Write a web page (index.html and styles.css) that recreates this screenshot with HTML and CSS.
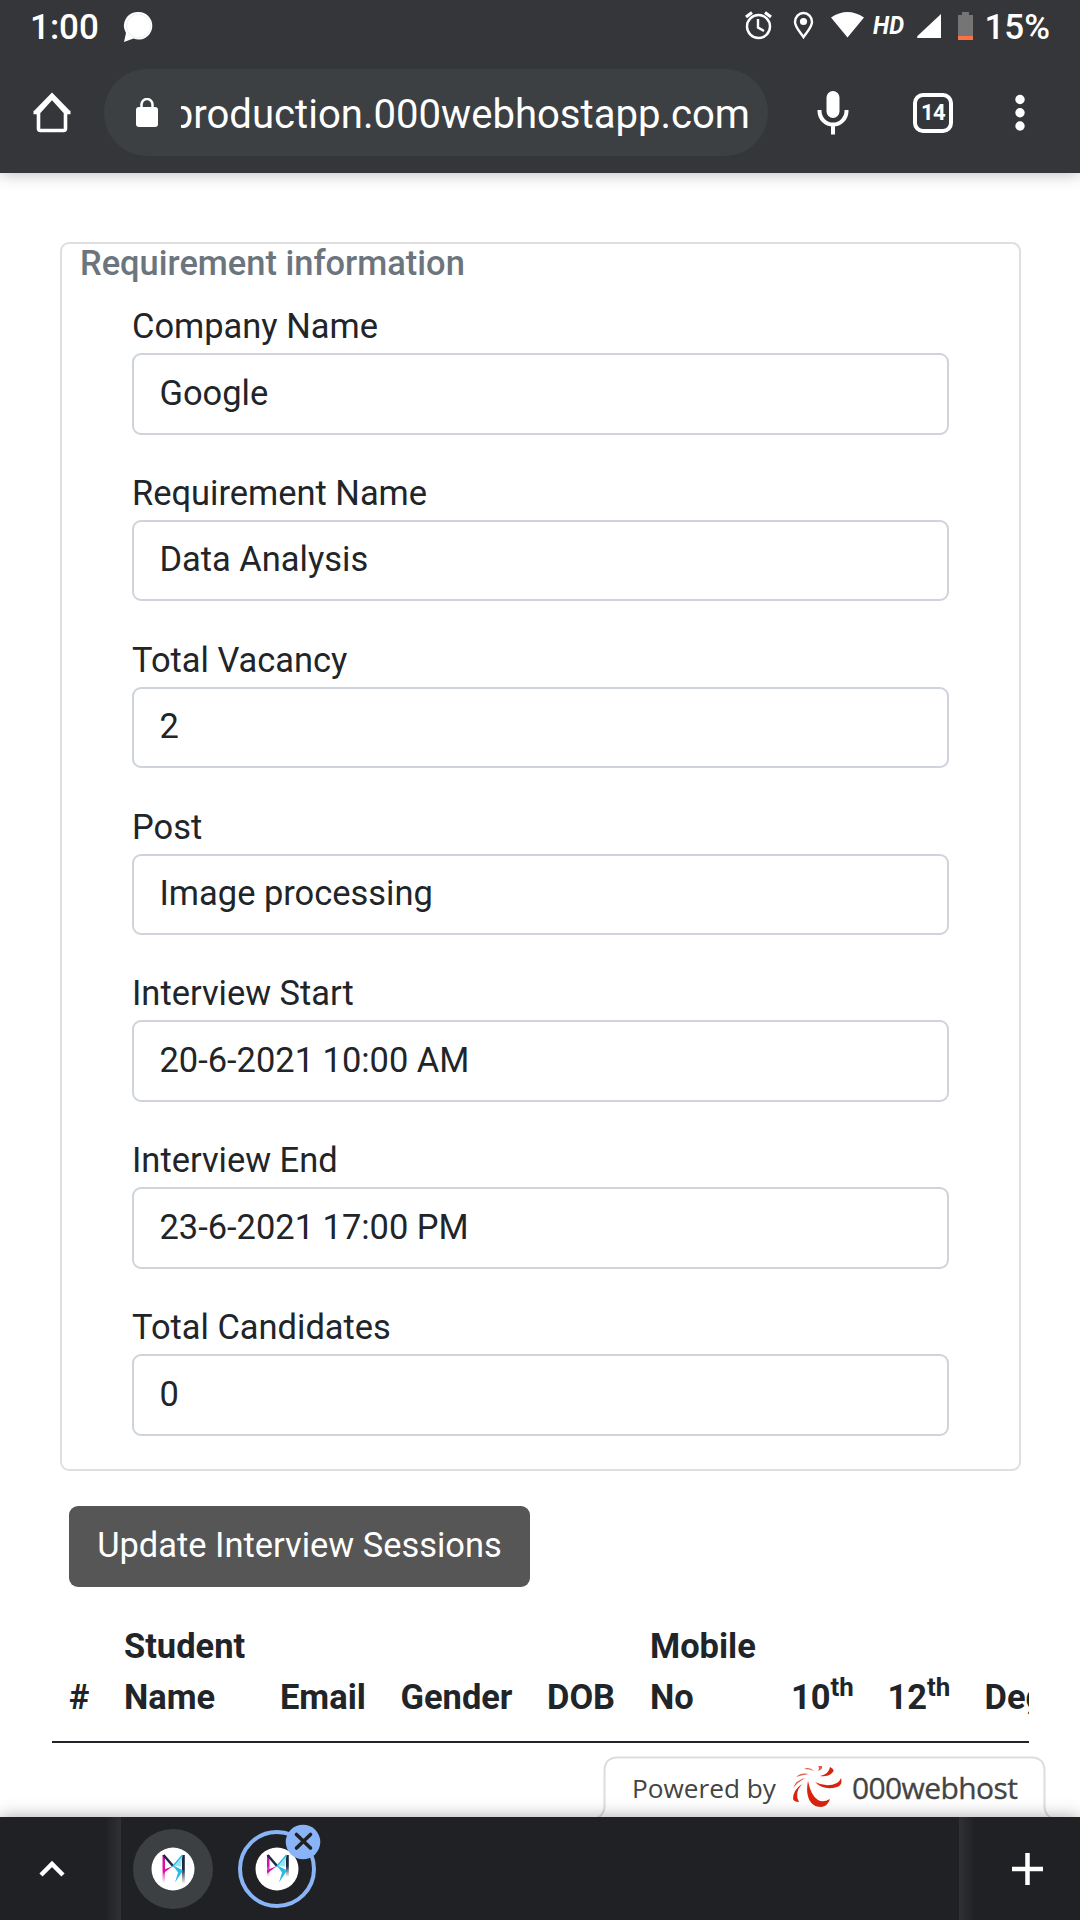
FILE: index.html
```html
<!DOCTYPE html>
<html lang="en">
<head>
<meta charset="utf-8">
<title>Requirement information</title>
<link rel="stylesheet" href="styles.css">
</head>
<body>
<div class="screen">
  <header class="chrome">
    <div class="status">
      <span class="clock">1:00</span>
      <svg class="chat" width="30" height="32" viewBox="0 0 30 32"><path d="M15.5 1a13.5 13.8 0 1 1-5 26.5L1 31l2-9A13.5 13.8 0 0 1 15.5 1z" fill="#fff"/><circle cx="15.5" cy="15" r="12" fill="none" stroke="#eee"/></svg>
      <span class="spacer"></span>
      <svg class="status-icons" width="230" height="34" viewBox="744 10 230 34">
        <g fill="none" stroke="#fff" stroke-width="2.4"><circle cx="758.500" cy="26.500" r="11.500"/><path d="M758 19v8.500l6 3.500"/><path d="M746 17l6-4.500M771 17l-6-4.500" stroke-width="3.200"/><path d="M803.500 37c-4-6-8.500-10-8.500-15a8.500 9 0 0 1 17 0c0 5-4.500 9-8.500 15z"/></g>
        <circle cx="803.500" cy="21.500" r="3.600" fill="#fff"/>
        <path d="M831 17.500q16.500-11 33 0L847.500 37.500z" fill="#fff"/>
        <text class="hd" x="873" y="34" textLength="31" lengthAdjust="spacingAndGlyphs">HD</text>
        <path d="M941 14v24h-23q-2-.5 0-2.500z" fill="#fff"/>
        <path d="M962 12h7v3h4v21h-15V15h4z" fill="#757575"/><path d="M958 36h15v4h-15z" fill="#ff7043"/>
      </svg>
      <span class="battery">15%</span>
    </div>
    <div class="toolbar">
      <svg class="home" width="40" height="42" viewBox="0 0 40 42"><path d="M6.500 19.500v17q0 2 2 2h23q2 0 2-2v-17M1.500 20.500h5L20 5.500l13.500 15h5M3 20.500L20 3l17 17.500" fill="none" stroke="#fff" stroke-width="3.600"/></svg>
      <div class="omnibox">
        <svg class="lock" width="22" height="30" viewBox="0 0 22 30"><rect y="9" width="22" height="20" rx="3" fill="#fff"/><path d="M5.500 10V6.500a5.500 5.500 0 0 1 11 0V10" fill="none" stroke="#fff" stroke-width="2.500"/></svg>
        <div class="url"><span>production.000webhostapp.com</span></div>
      </div>
      <svg class="mic" width="32" height="46" viewBox="0 0 32 46"><rect x="9.500" y="1" width="13" height="27" rx="6.500" fill="#fff"/><path d="M2.500 20v1a13.500 13.500 0 0 0 27 0v-1M16 34v10.500" fill="none" stroke="#fff" stroke-width="4"/></svg>
      <div class="tabs">14</div>
      <svg class="dots" width="10" height="38" viewBox="0 0 10 38"><g fill="#fff"><circle cx="5" cy="5.500" r="4.700"/><circle cx="5" cy="18.700" r="4.700"/><circle cx="5" cy="32" r="4.700"/></g></svg>
    </div>
  </header>

  <main class="page">
    <section class="card">
      <h6 class="card-title">Requirement information</h6>
      <div class="group"><label>Company Name</label><div class="field">Google</div></div>
      <div class="group"><label>Requirement Name</label><div class="field">Data Analysis</div></div>
      <div class="group"><label>Total Vacancy</label><div class="field">2</div></div>
      <div class="group"><label>Post</label><div class="field">Image processing</div></div>
      <div class="group"><label>Interview Start</label><div class="field">20-6-2021 10:00 AM</div></div>
      <div class="group"><label>Interview End</label><div class="field">23-6-2021 17:00 PM</div></div>
      <div class="group"><label>Total Candidates</label><div class="field">0</div></div>
    </section>
    <button class="update">Update Interview Sessions</button>
    <div class="table-wrap">
      <div class="thead">
        <span>#</span><span>Student<br>Name</span><span>Email</span><span>Gender</span><span>DOB</span><span>Mobile<br>No</span><span>10<sup>th</sup></span><span>12<sup>th</sup></span><span>Degree</span>
      </div>
    </div>
    <div class="powered">
      <svg class="powered-shape" width="464" height="64" viewBox="0 0 464 64"><path d="M0 64Q12 61 12.500 51V14Q13 2 25 1.500H440Q452 2 452.500 14V51Q453 61 464 64z" fill="#fff" stroke="#ddddd9" stroke-width="2"/></svg>
      <span class="powered-by">Powered by</span>
      <svg class="swirl" width="50" height="44" viewBox="0 0 50 44"><g fill="#d9230f"><path d="M16 16C13 31 18 42 29 42Q36 41 38 34Q31 38 26 35Q19 31 16 16z"/><path d="M23 17Q35 23 45 18Q48 16 49 13Q51 20 45 22Q32 26 23 17z"/><path d="M28 11Q37 9 38 2Q44 5 40 8Q36 12 28 11z"/><path d="M10 19Q2 28 7 37Q2 37 1 34Q1 25 10 19z"/><path d="M13 13Q4 15 1 23Q6 17 13 13zM17 9Q9 7 4 12Q10 10 17 9zM22 6Q17 1 12 4Q18 4 22 6zM26 6Q28 3 26 1H30Q31 4 26 6z" opacity=".75"/></g></svg>
      <span class="brand">000webhost</span>
    </div>
  </main>

  <footer class="tabstrip">
    <div class="side left"><svg width="28" height="18" viewBox="0 0 28 18"><path d="M3 15L14 4l11 11" fill="none" stroke="#fff" stroke-width="4.500"/></svg></div>
    <div class="favs">
      <div class="fav muted"><svg width="44" height="44" viewBox="0 0 44 44">
        <defs>
          <linearGradient id="pink" x1="0" y1="0" x2="0" y2="1"><stop offset=".5" stop-color="#d611a5"/><stop offset="1" stop-color="#d611a5" stop-opacity="0"/></linearGradient>
          <linearGradient id="navy" x1="0" y1="0" x2="0" y2="1"><stop offset=".5" stop-color="#1b2a41"/><stop offset="1" stop-color="#1b2a41" stop-opacity="0"/></linearGradient>
          <g id="wings"><path d="M12.500 8L22 19" stroke="#1b2a41" stroke-width="2.500"/><path d="M22 19L12 23v3.500z" fill="#d611a5"/><path d="M31.500 8L22 19l8 .5z" fill="#9be1f4"/><path d="M31.500 8L22 19l9 4.500" fill="none" stroke="#25bce5" stroke-width="1.300"/><path d="M23 20l9 3.500-8 12 3-10z" fill="#25bce5"/></g>
        </defs>
        <circle cx="22" cy="22" r="21.500" fill="#fff"/><path d="M11.500 8h2.500v28h-2.500z" fill="url(#pink)"/><path d="M31 8h2.800v29H31z" fill="url(#navy)"/><use href="#wings"/></svg></div>
      <div class="fav active"><svg width="44" height="44" viewBox="0 0 44 44"><circle cx="22" cy="22" r="21.500" fill="#fff"/><path d="M12 8h2.500v22H12z" fill="url(#pink)"/><path d="M31 8h2.800v22H31z" fill="url(#navy)"/><use href="#wings"/></svg>
        <svg class="close" width="36" height="36" viewBox="0 0 36 36"><circle cx="18" cy="18" r="17.300" fill="#8ab4f8"/><path d="M11.500 10.500L25.500 24M25.500 10.500L11.500 24" stroke="#202124" stroke-width="3.600" stroke-linecap="round"/></svg>
      </div>
    </div>
    <div class="side right"><svg width="32" height="32" viewBox="0 0 32 32"><path d="M0 16h31M15.500 0v32" stroke="#fff" stroke-width="4.500"/></svg></div>
  </footer>
</div>
</body>
</html>
```
FILE: styles.css
```css
* { box-sizing: border-box; }
body { margin: 0; background: #fff; color: #212529; font-family: Roboto, sans-serif; font-size: 34.450px; line-height: 51px; }
svg { display: block; flex: none; }
.screen { width: 1080px; height: 1920px; display: flex; flex-direction: column; overflow: hidden; }

.chrome { height: 173px; flex: none; background: #35363a; color: #fff; box-shadow: 0 0 16px rgba(0,0,0,.3); position: relative; z-index: 1; }
.status { height: 54px; display: flex; align-items: center; padding: 0 30px 0 30px; }
.clock, .battery { font-size: 35px; font-weight: 500; line-height: 54px; padding-top: 1px; }
.chat { margin-left: 24px; }
.spacer { flex: 1; }
.status-icons { margin-right: 10px; }
.hd { font: italic 700 25px Roboto, sans-serif; fill: #fff; }
.toolbar { display: flex; align-items: center; height: 87px; margin-top: 15px; padding-left: 32px; }
.omnibox { width: 664px; height: 87px; margin-left: 32px; border-radius: 44px; background: #3c4043; display: flex; align-items: center; padding-left: 32px; }
.url { width: 569px; margin-left: 23px; padding-top: 4px; overflow: hidden; display: flex; justify-content: flex-end; font-size: 40.100px; line-height: 56px; white-space: nowrap; }
.mic { margin-left: 49px; }
.tabs { width: 40px; height: 40px; margin-left: 64px; border: 4px solid #fff; border-radius: 10px; font-size: 22px; letter-spacing: -.5px; font-weight: 700; line-height: 32px; text-align: center; }
.dots { margin-left: 62px; }

.page { flex: 1; min-height: 0; position: relative; padding: 69px 51px 0 52px; }
.card { width: 961px; height: 1229px; margin-left: 8px; border: 2px solid #dfdfdf; border-radius: 9px; padding: 0 70px 0 70px; }
.card-title { margin: 0 0 18px -52px; color: #6c757d; font-size: 34.450px; font-weight: 500; line-height: 39px; }
.group { height: 166.850px; }
.group label { display: block; height: 52px; }
.field { height: 81.500px; border: 2px solid #ced4da; border-radius: 9px; padding: 12.500px 25.500px; }
.update { display: block; width: 461px; height: 81px; margin: 35px 0 0 17px; border: 0; border-radius: 9px; background: #565656; color: #fff; font: 34.450px/51px Roboto, sans-serif; padding: 0 0 3px; white-space: nowrap; }
.table-wrap { width: 977px; margin-top: 16px; overflow: hidden; }
.thead { display: grid; grid-template-columns: 55px 156px 120.500px 146.500px 103px 141px 96.500px 97px 160px; align-items: end; height: 140px; padding-bottom: 18px; border-bottom: 2px solid #212529; font-weight: 700; }
.thead span { padding-left: 17px; white-space: nowrap; }
sup { font-size: .75em; line-height: 0; position: relative; top: -.5em; vertical-align: baseline; }

.powered { position: absolute; left: 593px; top: 1583px; width: 463px; height: 64px; font-family: "Open Sans", sans-serif; font-size: 26.200px; line-height: 36px; color: #444; display: flex; align-items: center; padding: 0 0 1px 39px; }
.powered-shape { position: absolute; left: -1px; top: 0; }
.powered span, .swirl { position: relative; }
.swirl { margin: 0 0 1px 16px; }
.brand { margin-left: 10px; font-size: 30px; letter-spacing: -.6px; -webkit-text-stroke: .3px #444; }

.tabstrip { height: 103px; flex: none; background: #202124; display: flex; box-shadow: 0 0 16px rgba(0,0,0,.35); position: relative; z-index: 1; }
.side { display: flex; align-items: center; width: 121px; }
.left { padding-left: 38px; background: linear-gradient(90deg, #202124 105px, #303134); }
.right { padding-left: 53px; background: linear-gradient(90deg, #303134, #202124 16px); }
.favs { flex: 1; display: flex; align-items: center; gap: 25px; padding-left: 12px; }
.fav { width: 80px; height: 80px; border-radius: 50%; display: flex; align-items: center; justify-content: center; position: relative; }
.muted { background: #3c4043; }
.active { width: 78px; height: 78px; border: 4px solid #8ab4f8; }
.close { position: absolute; left: 43px; top: -10px; }
```
